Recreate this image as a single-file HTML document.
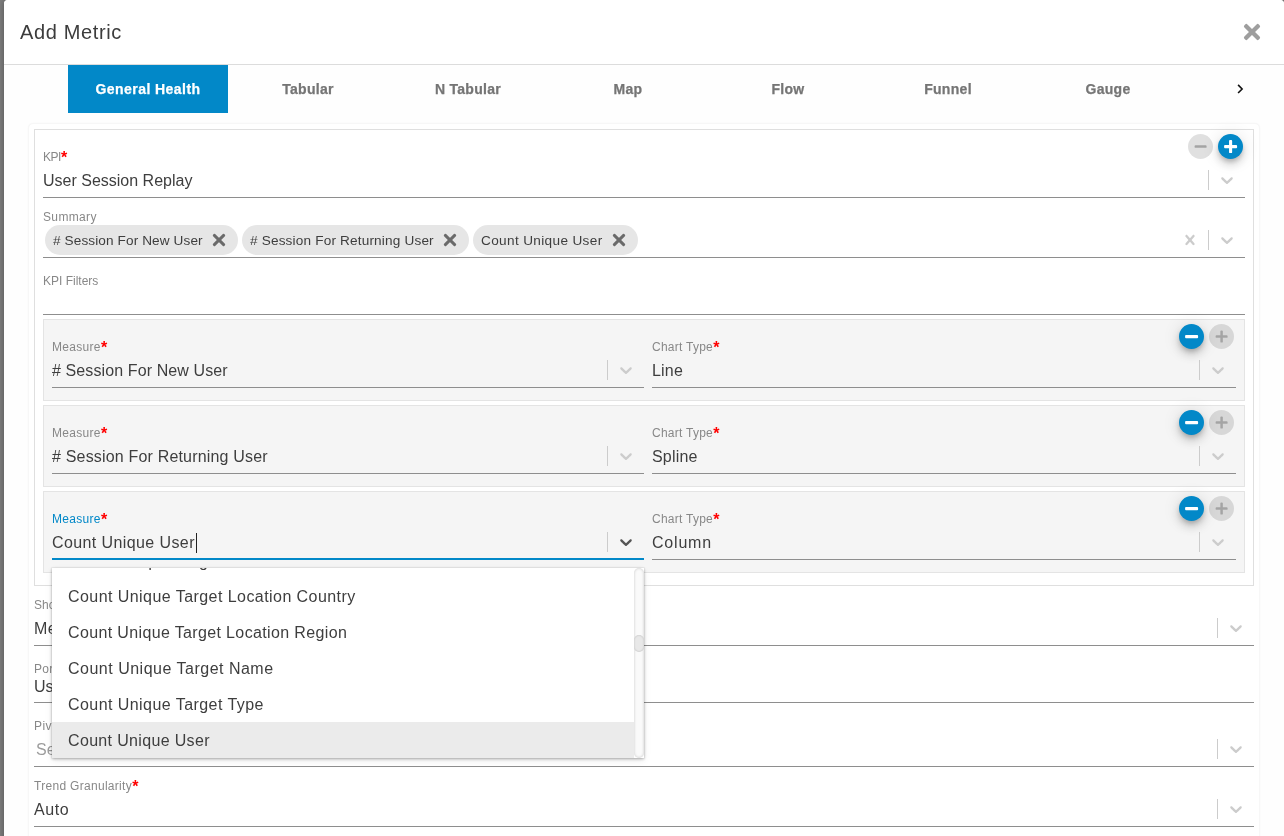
<!DOCTYPE html>
<html lang="en"><head><meta charset="utf-8"><title>Add Metric</title>
<style>
*{box-sizing:border-box}
html,body{margin:0;padding:0;overflow:hidden}
body{width:1284px;height:836px;overflow:hidden;position:relative;background:#7e7e7e;font-family:"Liberation Sans",Arial,sans-serif;color:#333}
.abs{position:absolute}
.modal{left:4px;top:0;width:1280px;height:900px;background:#fefefe;border-radius:4px 4px 0 0;box-shadow:0 0 7px rgba(0,0,0,.34)}
.hdr{left:4px;top:0;width:1280px;height:65px;background:#fff;border-bottom:1px solid #dcdcdc;border-radius:4px 4px 0 0}
.title{left:20px;top:18px;font-size:20px;line-height:28px;letter-spacing:.64px;color:#3c3c3c}
.tab{top:65px;width:160px;height:48px;line-height:48px;text-align:center;font-size:14px;font-weight:700;color:#757575;white-space:nowrap;-webkit-text-stroke:.25px}
.tab.act{background:#0288c8;color:#fff}
.wrap{left:28px;top:123px;width:1232px;height:760px;background:#fff;border-radius:5px;border:1px solid #f7f7f7;box-shadow:0 0 2px rgba(0,0,0,.03)}
.card{left:34px;top:129px;width:1220px;height:457px;background:#fff;border:1px solid #dfdfdf}
.blk{left:43px;width:1202px;height:82px;background:#f5f5f5;border:1px solid #e4e4e4}
.lab{font-size:12px;line-height:14px;color:#888;white-space:nowrap}
/*v*/.val{font-size:16px;line-height:20px;color:#3e3e3e;white-space:nowrap}
.req{color:#f00;letter-spacing:0;font-size:16px;font-weight:700;line-height:0;vertical-align:-2.1px;margin-left:.2px}
.ul{height:1px;background:#8e8e8e}
.ulb{height:2px;background:#0288c8;margin-top:-1px}
.chip{height:30px;border-radius:15px;background:#e6e6e6;font-size:13.6px;line-height:31.6px;padding-left:8px;color:#3e3e3e;white-space:nowrap}
.chip .cx{position:absolute;right:11.7px;top:8.1px}
.fab{width:25px;height:25px;border-radius:50%}
.fab svg{display:block}
.fab.on{background:#0288c8;box-shadow:0 3px 5px -1px rgba(0,0,0,.2),0 6px 10px 0 rgba(0,0,0,.14),0 1px 18px 0 rgba(0,0,0,.12)}
.fab.off{background:rgba(0,0,0,.12)}
.menu{left:52px;top:568px;width:592px;height:190px;background:#fff;overflow:hidden;box-shadow:0 0 0 1px rgba(0,0,0,.03),0 1px 3px rgba(0,0,0,.3),0 3px 8px rgba(0,0,0,.07)}
.opt{position:absolute;left:0;width:582px;height:36px;line-height:38px;padding-left:16px;font-size:16px;color:#3e3e3e;white-space:nowrap;letter-spacing:.42px}
.opt.sel{background:#ebebeb}
.sbar{position:absolute;right:0;top:0;width:10px;height:190px;border-radius:5px;background:#fafafa;box-shadow:inset 0 0 3px rgba(0,0,0,.2)}
.sthumb{position:absolute;right:0;top:67px;width:10px;height:17px;border-radius:5px;background:#e8e8e8;box-shadow:inset 0 0 2px rgba(0,0,0,.22)}
#root{position:absolute;left:0;top:0;width:1284px;height:836px;overflow:hidden;will-change:transform}
</style></head><body><div id="root">
<div class="abs modal"></div>
<div class="abs hdr"></div>
<div class="abs title">Add Metric</div>
<svg class="abs" style="left:1241.5px;top:22px" width="20" height="20" viewBox="0 0 20 20"><g fill="#9e9e9e"><rect x="-0.2" y="7.85" width="20.4" height="4.3" rx="1.6" transform="rotate(45 10 10)"/><rect x="-0.2" y="7.85" width="20.4" height="4.3" rx="1.6" transform="rotate(-45 10 10)"/></g></svg>

<div class="abs tab act" style="left:68px;letter-spacing:0.44px">General Health</div>
<div class="abs tab" style="left:228px;letter-spacing:0.3px">Tabular</div>
<div class="abs tab" style="left:388px;letter-spacing:0.3px">N Tabular</div>
<div class="abs tab" style="left:548px;letter-spacing:0.3px">Map</div>
<div class="abs tab" style="left:708px;letter-spacing:0.3px">Flow</div>
<div class="abs tab" style="left:868px;letter-spacing:0.3px">Funnel</div>
<div class="abs tab" style="left:1028px;letter-spacing:0.3px">Gauge</div>
<svg class="abs" style="left:1232px;top:81px" width="16" height="16" viewBox="0 0 16 16"><path d="M6.1 3.9l4 4.05-4 4.05" stroke="#111" stroke-width="1.6" fill="none"/></svg>
<div class="abs wrap"></div>
<div class="abs card"></div>
<div class="abs lab" style="left:43px;top:150px;letter-spacing:-0.5px">KPI<span class="req">*</span></div>
<div class="abs val" style="left:43px;top:170.5px;letter-spacing:0.0px">User Session Replay</div>
<div class="abs ul" style="left:43px;top:197px;width:1202px"></div>
<div class="abs" style="left:1208px;top:170px;width:1px;height:20px;background:#ccc"></div>
<svg class="abs" style="left:1217px;top:170px" width="20" height="20" viewBox="0 0 20 20"><path fill="#ccc" d="M4.516 7.548c0.436-0.446 1.043-0.481 1.576 0l3.908 3.747 3.908-3.747c0.533-0.481 1.141-0.446 1.574 0 0.436 0.445 0.408 1.197 0 1.615-0.406 0.418-4.695 4.502-4.695 4.502-0.217 0.223-0.502 0.335-0.787 0.335s-0.57-0.112-0.789-0.335c0 0-4.287-4.084-4.695-4.502s-0.436-1.17 0-1.615z"/></svg>
<div class="abs fab off" style="left:1188.0px;top:134.0px"><svg width="25" height="25" viewBox="0 0 25 25"><rect x="6.60" y="11.35" width="12.0" height="2.5" rx="0.9" fill="#a4a4a4"/></svg></div>
<div class="abs fab on" style="left:1218.0px;top:134.0px"><svg width="25" height="25" viewBox="0 0 25 25"><rect x="6.10" y="11.05" width="13.0" height="3.1" rx="0.9" fill="#fff"/><rect x="11.05" y="6.10" width="3.1" height="13.0" rx="0.9" fill="#fff"/></svg></div>
<div class="abs lab" style="left:43px;top:210px;letter-spacing:0.35px">Summary</div>
<div class="abs ul" style="left:43px;top:257px;width:1202px"></div>
<div class="abs" style="left:1208px;top:230px;width:1px;height:20px;background:#ccc"></div>
<svg class="abs" style="left:1217px;top:230px" width="20" height="20" viewBox="0 0 20 20"><path fill="#ccc" d="M4.516 7.548c0.436-0.446 1.043-0.481 1.576 0l3.908 3.747 3.908-3.747c0.533-0.481 1.141-0.446 1.574 0 0.436 0.445 0.408 1.197 0 1.615-0.406 0.418-4.695 4.502-4.695 4.502-0.217 0.223-0.502 0.335-0.787 0.335s-0.57-0.112-0.789-0.335c0 0-4.287-4.084-4.695-4.502s-0.436-1.17 0-1.615z"/></svg>
<div class="abs chip" style="left:45px;top:225px;width:193px"><span style="letter-spacing:0.11px"># Session For New User</span><svg class="cx" width="14" height="14" viewBox="0 0 14 14"><g fill="#6a6a6a"><rect x="-0.9" y="5.55" width="15.8" height="2.9" rx="1" transform="rotate(45 7 7)"/><rect x="-0.9" y="5.55" width="15.8" height="2.9" rx="1" transform="rotate(-45 7 7)"/></g></svg></div>
<div class="abs chip" style="left:242px;top:225px;width:226.5px"><span style="letter-spacing:0.17px"># Session For Returning User</span><svg class="cx" width="14" height="14" viewBox="0 0 14 14"><g fill="#6a6a6a"><rect x="-0.9" y="5.55" width="15.8" height="2.9" rx="1" transform="rotate(45 7 7)"/><rect x="-0.9" y="5.55" width="15.8" height="2.9" rx="1" transform="rotate(-45 7 7)"/></g></svg></div>
<div class="abs chip" style="left:473px;top:225px;width:165px"><span style="letter-spacing:0.35px">Count Unique User</span><svg class="cx" width="14" height="14" viewBox="0 0 14 14"><g fill="#6a6a6a"><rect x="-0.9" y="5.55" width="15.8" height="2.9" rx="1" transform="rotate(45 7 7)"/><rect x="-0.9" y="5.55" width="15.8" height="2.9" rx="1" transform="rotate(-45 7 7)"/></g></svg></div>
<svg class="abs" style="left:1180px;top:230px" width="20" height="20" viewBox="0 0 20 20"><path fill="#ccc" d="M14.348 14.849c-0.469 0.469-1.229 0.469-1.697 0l-2.651-3.030-2.651 3.029c-0.469 0.469-1.229 0.469-1.697 0-0.469-0.469-0.469-1.229 0-1.697l2.758-3.15-2.759-3.152c-0.469-0.469-0.469-1.228 0-1.697s1.228-0.469 1.697 0l2.652 3.031 2.651-3.031c0.469-0.469 1.228-0.469 1.697 0s0.469 1.229 0 1.697l-2.758 3.152 2.758 3.15c0.469 0.469 0.469 1.229 0 1.698z"/></svg>
<div class="abs lab" style="left:43px;top:274px;letter-spacing:0px">KPI Filters</div>
<div class="abs ul" style="left:43px;top:314px;width:1202px"></div>
<div class="abs blk" style="top:319px"></div>
<div class="abs lab" style="left:52px;top:340px;letter-spacing:0.3px">Measure<span class="req">*</span></div>
<div class="abs val" style="left:52px;top:360.5px;letter-spacing:0.11px"># Session For New User</div>
<div class="abs ul" style="left:52px;top:387px;width:592px"></div>
<div class="abs" style="left:607px;top:360px;width:1px;height:20px;background:#ccc"></div>
<svg class="abs" style="left:616px;top:360px" width="20" height="20" viewBox="0 0 20 20"><path fill="#ccc" d="M4.516 7.548c0.436-0.446 1.043-0.481 1.576 0l3.908 3.747 3.908-3.747c0.533-0.481 1.141-0.446 1.574 0 0.436 0.445 0.408 1.197 0 1.615-0.406 0.418-4.695 4.502-4.695 4.502-0.217 0.223-0.502 0.335-0.787 0.335s-0.57-0.112-0.789-0.335c0 0-4.287-4.084-4.695-4.502s-0.436-1.17 0-1.615z"/></svg>
<div class="abs lab" style="left:652px;top:340px;letter-spacing:0.25px">Chart Type<span class="req">*</span></div>
<div class="abs val" style="left:652px;top:360.5px;letter-spacing:0.2px">Line</div>
<div class="abs ul" style="left:652px;top:387px;width:584px"></div>
<div class="abs" style="left:1199px;top:360px;width:1px;height:20px;background:#ccc"></div>
<svg class="abs" style="left:1208px;top:360px" width="20" height="20" viewBox="0 0 20 20"><path fill="#ccc" d="M4.516 7.548c0.436-0.446 1.043-0.481 1.576 0l3.908 3.747 3.908-3.747c0.533-0.481 1.141-0.446 1.574 0 0.436 0.445 0.408 1.197 0 1.615-0.406 0.418-4.695 4.502-4.695 4.502-0.217 0.223-0.502 0.335-0.787 0.335s-0.57-0.112-0.789-0.335c0 0-4.287-4.084-4.695-4.502s-0.436-1.17 0-1.615z"/></svg>
<div class="abs fab on" style="left:1179.0px;top:324.0px"><svg width="25" height="25" viewBox="0 0 25 25"><rect x="6.10" y="11.05" width="13.0" height="3.1" rx="0.9" fill="#fff"/></svg></div>
<div class="abs fab off" style="left:1209.0px;top:324.0px"><svg width="25" height="25" viewBox="0 0 25 25"><rect x="6.60" y="11.35" width="12.0" height="2.5" rx="0.9" fill="#a4a4a4"/><rect x="11.35" y="6.60" width="2.5" height="12.0" rx="0.9" fill="#a4a4a4"/></svg></div>
<div class="abs blk" style="top:405px"></div>
<div class="abs lab" style="left:52px;top:426px;letter-spacing:0.3px">Measure<span class="req">*</span></div>
<div class="abs val" style="left:52px;top:446.5px;letter-spacing:0.18px"># Session For Returning User</div>
<div class="abs ul" style="left:52px;top:473px;width:592px"></div>
<div class="abs" style="left:607px;top:446px;width:1px;height:20px;background:#ccc"></div>
<svg class="abs" style="left:616px;top:446px" width="20" height="20" viewBox="0 0 20 20"><path fill="#ccc" d="M4.516 7.548c0.436-0.446 1.043-0.481 1.576 0l3.908 3.747 3.908-3.747c0.533-0.481 1.141-0.446 1.574 0 0.436 0.445 0.408 1.197 0 1.615-0.406 0.418-4.695 4.502-4.695 4.502-0.217 0.223-0.502 0.335-0.787 0.335s-0.57-0.112-0.789-0.335c0 0-4.287-4.084-4.695-4.502s-0.436-1.17 0-1.615z"/></svg>
<div class="abs lab" style="left:652px;top:426px;letter-spacing:0.25px">Chart Type<span class="req">*</span></div>
<div class="abs val" style="left:652px;top:446.5px;letter-spacing:0.2px">Spline</div>
<div class="abs ul" style="left:652px;top:473px;width:584px"></div>
<div class="abs" style="left:1199px;top:446px;width:1px;height:20px;background:#ccc"></div>
<svg class="abs" style="left:1208px;top:446px" width="20" height="20" viewBox="0 0 20 20"><path fill="#ccc" d="M4.516 7.548c0.436-0.446 1.043-0.481 1.576 0l3.908 3.747 3.908-3.747c0.533-0.481 1.141-0.446 1.574 0 0.436 0.445 0.408 1.197 0 1.615-0.406 0.418-4.695 4.502-4.695 4.502-0.217 0.223-0.502 0.335-0.787 0.335s-0.57-0.112-0.789-0.335c0 0-4.287-4.084-4.695-4.502s-0.436-1.17 0-1.615z"/></svg>
<div class="abs fab on" style="left:1179.0px;top:410.0px"><svg width="25" height="25" viewBox="0 0 25 25"><rect x="6.10" y="11.05" width="13.0" height="3.1" rx="0.9" fill="#fff"/></svg></div>
<div class="abs fab off" style="left:1209.0px;top:410.0px"><svg width="25" height="25" viewBox="0 0 25 25"><rect x="6.60" y="11.35" width="12.0" height="2.5" rx="0.9" fill="#a4a4a4"/><rect x="11.35" y="6.60" width="2.5" height="12.0" rx="0.9" fill="#a4a4a4"/></svg></div>
<div class="abs blk" style="top:491px"></div>
<div class="abs lab" style="left:52px;top:512px;letter-spacing:0.3px;color:#0288c8">Measure<span class="req">*</span></div>
<div class="abs val" style="left:52px;top:532.5px;letter-spacing:0.4px">Count Unique User<span style="position:absolute;right:-2.5px;top:0;width:1px;height:20px;background:#222"></span></div>
<div class="abs ulb" style="left:52px;top:559px;width:592px"></div>
<div class="abs" style="left:607px;top:532px;width:1px;height:20px;background:#ccc"></div>
<svg class="abs" style="left:616px;top:532px" width="20" height="20" viewBox="0 0 20 20"><path fill="#555" d="M4.516 7.548c0.436-0.446 1.043-0.481 1.576 0l3.908 3.747 3.908-3.747c0.533-0.481 1.141-0.446 1.574 0 0.436 0.445 0.408 1.197 0 1.615-0.406 0.418-4.695 4.502-4.695 4.502-0.217 0.223-0.502 0.335-0.787 0.335s-0.57-0.112-0.789-0.335c0 0-4.287-4.084-4.695-4.502s-0.436-1.17 0-1.615z"/></svg>
<div class="abs lab" style="left:652px;top:512px;letter-spacing:0.25px">Chart Type<span class="req">*</span></div>
<div class="abs val" style="left:652px;top:532.5px;letter-spacing:0.8px">Column</div>
<div class="abs ul" style="left:652px;top:559px;width:584px"></div>
<div class="abs" style="left:1199px;top:532px;width:1px;height:20px;background:#ccc"></div>
<svg class="abs" style="left:1208px;top:532px" width="20" height="20" viewBox="0 0 20 20"><path fill="#ccc" d="M4.516 7.548c0.436-0.446 1.043-0.481 1.576 0l3.908 3.747 3.908-3.747c0.533-0.481 1.141-0.446 1.574 0 0.436 0.445 0.408 1.197 0 1.615-0.406 0.418-4.695 4.502-4.695 4.502-0.217 0.223-0.502 0.335-0.787 0.335s-0.57-0.112-0.789-0.335c0 0-4.287-4.084-4.695-4.502s-0.436-1.17 0-1.615z"/></svg>
<div class="abs fab on" style="left:1179.0px;top:496.0px"><svg width="25" height="25" viewBox="0 0 25 25"><rect x="6.10" y="11.05" width="13.0" height="3.1" rx="0.9" fill="#fff"/></svg></div>
<div class="abs fab off" style="left:1209.0px;top:496.0px"><svg width="25" height="25" viewBox="0 0 25 25"><rect x="6.60" y="11.35" width="12.0" height="2.5" rx="0.9" fill="#a4a4a4"/><rect x="11.35" y="6.60" width="2.5" height="12.0" rx="0.9" fill="#a4a4a4"/></svg></div>
<div class="abs lab" style="left:34px;top:598.3px;letter-spacing:0.0px">Show</div>
<div class="abs val" style="left:34px;top:618.8px;letter-spacing:0.3px">Measure</div>
<div class="abs ul" style="left:34px;top:645.3px;width:1220px"></div>
<div class="abs" style="left:1217px;top:618.3px;width:1px;height:20px;background:#ccc"></div>
<svg class="abs" style="left:1226px;top:618.3px" width="20" height="20" viewBox="0 0 20 20"><path fill="#ccc" d="M4.516 7.548c0.436-0.446 1.043-0.481 1.576 0l3.908 3.747 3.908-3.747c0.533-0.481 1.141-0.446 1.574 0 0.436 0.445 0.408 1.197 0 1.615-0.406 0.418-4.695 4.502-4.695 4.502-0.217 0.223-0.502 0.335-0.787 0.335s-0.57-0.112-0.789-0.335c0 0-4.287-4.084-4.695-4.502s-0.436-1.17 0-1.615z"/></svg>
<div class="abs lab" style="left:34px;top:662.3px;letter-spacing:.3px">Portlet Name<span class="req">*</span></div>
<div class="abs val" style="left:34px;top:676.5px">User Session Replay</div>
<div class="abs ul" style="left:34px;top:702px;width:1220px"></div>
<div class="abs lab" style="left:34px;top:719px;letter-spacing:0.45px">Pivot</div>
<div class="abs val" style="left:34px;top:739.5px;letter-spacing:0.1px;color:#9c9c9c"><span style="margin-left:2px">Select...</span></div>
<div class="abs ul" style="left:34px;top:766px;width:1220px"></div>
<div class="abs" style="left:1217px;top:739px;width:1px;height:20px;background:#ccc"></div>
<svg class="abs" style="left:1226px;top:739px" width="20" height="20" viewBox="0 0 20 20"><path fill="#ccc" d="M4.516 7.548c0.436-0.446 1.043-0.481 1.576 0l3.908 3.747 3.908-3.747c0.533-0.481 1.141-0.446 1.574 0 0.436 0.445 0.408 1.197 0 1.615-0.406 0.418-4.695 4.502-4.695 4.502-0.217 0.223-0.502 0.335-0.787 0.335s-0.57-0.112-0.789-0.335c0 0-4.287-4.084-4.695-4.502s-0.436-1.17 0-1.615z"/></svg>
<div class="abs lab" style="left:34px;top:779.3px;letter-spacing:0.3px">Trend Granularity<span class="req">*</span></div>
<div class="abs val" style="left:34px;top:799.8px;letter-spacing:0.55px">Auto</div>
<div class="abs ul" style="left:34px;top:826.3px;width:1220px"></div>
<div class="abs" style="left:1217px;top:799.3px;width:1px;height:20px;background:#ccc"></div>
<svg class="abs" style="left:1226px;top:799.3px" width="20" height="20" viewBox="0 0 20 20"><path fill="#ccc" d="M4.516 7.548c0.436-0.446 1.043-0.481 1.576 0l3.908 3.747 3.908-3.747c0.533-0.481 1.141-0.446 1.574 0 0.436 0.445 0.408 1.197 0 1.615-0.406 0.418-4.695 4.502-4.695 4.502-0.217 0.223-0.502 0.335-0.787 0.335s-0.57-0.112-0.789-0.335c0 0-4.287-4.084-4.695-4.502s-0.436-1.17 0-1.615z"/></svg>
<div class="abs menu">
<div class="opt" style="top:-25px;letter-spacing:0.42px">Count Unique Target Location Continent</div>
<div class="opt" style="top:10px;letter-spacing:0.44px">Count Unique Target Location Country</div>
<div class="opt" style="top:46px;letter-spacing:0.36px">Count Unique Target Location Region</div>
<div class="opt" style="top:82px;letter-spacing:0.5px">Count Unique Target Name</div>
<div class="opt" style="top:118px;letter-spacing:0.44px">Count Unique Target Type</div>
<div class="opt sel" style="top:154px;letter-spacing:0.34px">Count Unique User</div>
<div class="sbar"></div><div class="sthumb"></div>
</div>
</div></body></html>
